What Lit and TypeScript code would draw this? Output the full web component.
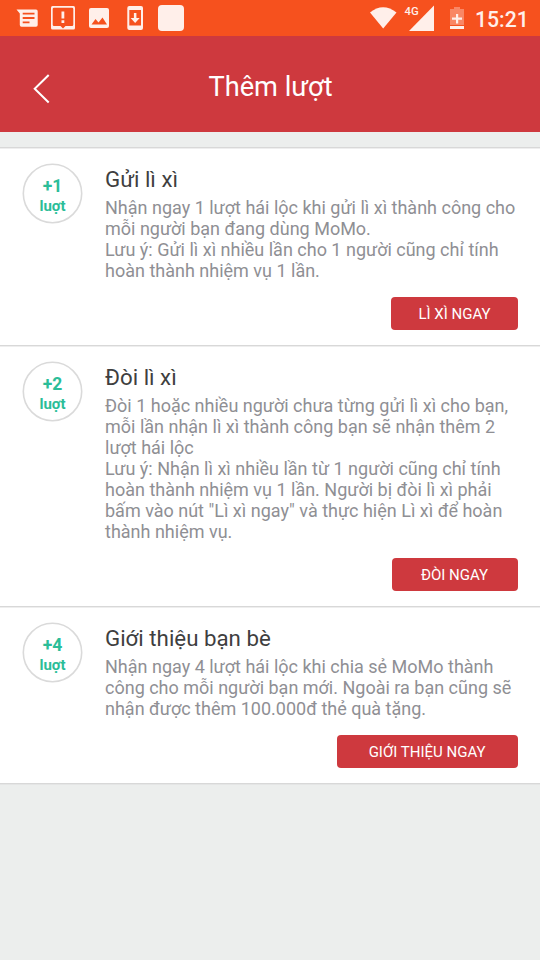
import { LitElement, html, css } from "lit";
import { customElement, property } from "lit/decorators.js";

interface Task { turns: number; title: string; lines: string[]; action: string; }

const TASKS: Task[] = [
  { turns: 1, title: "Gửi lì xì", action: "LÌ XÌ NGAY", lines: [
    "Nhận ngay 1 lượt hái lộc khi gửi lì xì thành công cho", "mỗi người bạn đang dùng MoMo.",
    "Lưu ý: Gửi lì xì nhiều lần cho 1 người cũng chỉ tính", "hoàn thành nhiệm vụ 1 lần."] },
  { turns: 2, title: "Đòi lì xì", action: "ĐÒI NGAY", lines: [
    "Đòi 1 hoặc nhiều người chưa từng gửi lì xì cho bạn,", "mỗi lần nhận lì xì thành công bạn sẽ nhận thêm 2", "lượt hái lộc",
    "Lưu ý: Nhận lì xì nhiều lần từ 1 người cũng chỉ tính", "hoàn thành nhiệm vụ 1 lần. Người bị đòi lì xì phải",
    "bấm vào nút \"Lì xì ngay\" và thực hiện Lì xì để hoàn", "thành nhiệm vụ."] },
  { turns: 4, title: "Giới thiệu bạn bè", action: "GIỚI THIỆU NGAY", lines: [
    "Nhận ngay 4 lượt hái lộc khi chia sẻ MoMo thành", "công cho mỗi người bạn mới. Ngoài ra bạn cũng sẽ", "nhận được thêm 100.000đ thẻ quà tặng."] },
];

@customElement("task-card")
export class TaskCard extends LitElement {
  @property({ attribute: false }) task!: Task;
  static styles = css`
    :host { display: flex; align-items: flex-start; background: #fff; padding: 15px 22.5px 15px 22px; border-bottom: 1px solid #d8d8d8; box-shadow: inset 0 1px #eeeeee; }
    .badge { flex: none; display: grid; width: 61px; height: 61px; color: #2bbd98; font-weight: 700; text-align: center; }
    .ring { grid-area: 1 / 1; display: block; }
    .count { grid-area: 1 / 1; padding-top: 13px; }
    .plus { font-size: 17.5px; line-height: 20px; }
    .unit { font-size: 15px; line-height: 20px; }
    .body { flex: 1; margin-left: 22px; display: flex; flex-direction: column; }
    .title { font-size: 22.3px; line-height: 30px; margin-top: 1px; color: #3f3f3f; white-space: nowrap; }
    .text { font-size: 18px; line-height: 21px; color: #8f8f94; margin-top: 3px; }
    .line { white-space: nowrap; }
    .action { align-self: flex-end; font-size: 15px; line-height: 33px; height: 33px; min-width: 126px; box-sizing: border-box; padding: 1px 27px 0;
      border-radius: 4px; background: #ce393e; color: #fff; margin-top: 16px; white-space: nowrap; text-align: center; }
    .wide { padding: 1px 32px 0; }
  `;
  render() {
    const t = this.task;
    return html`
      <div class="badge">
        <svg class="ring" width="61" height="61" viewBox="0 0 61 61"><circle cx="30.500" cy="30.500" r="29.200" fill="none" stroke="#dadada" stroke-width="1.600"/></svg>
        <div class="count"><div class="plus">+${t.turns}</div><div class="unit">luợt</div></div>
      </div>
      <div class="body">
        <div class="title">${t.title}</div>
        <div class="text">${t.lines.map((l) => html`<div class="line">${l}</div>`)}</div>
        <div class="action ${t.action.length > 12 ? "wide" : ""}" role="button">${t.action}</div>
      </div>`;
  }
}

@customElement("status-bar")
export class StatusBar extends LitElement {
  static styles = css`
    :host { display: flex; justify-content: space-between; height: 36px; background: #f6511e; color: #ffefea; }
    svg { display: block; flex: none; }
    .right { display: flex; }
    .time { font-size: 21.2px; font-weight: 500; line-height: 39px; width: 65px; white-space: nowrap; }
    .net { font-size: 11.3px; font-weight: 500; font-family: Roboto, sans-serif; }
  `;
  render() {
    return html`
      <svg width="200" height="36" viewBox="0 0 200 36" fill="#ffefea">
        <path d="M16.500 9.500H36Q37.700 9.500 37.700 11.200V25Q37.700 26.700 36 26.700H21.500Q19.800 26.700 19.800 25V13.500Z"/>
        <path d="M22.700 13.700H34.500M22.700 18H34.500M22.700 22.300H29.500" stroke="#f6511e" stroke-width="1.8"/>
        <rect x="51" y="6" width="24" height="23.500" rx="1.5"/>
        <path d="M54 7.800H72Q73.300 7.800 73.300 9V24.700Q73.300 26 72 26H65.500L63 28.500L60.500 26H54Q52.700 26 52.700 24.700V9Q52.700 7.800 54 7.800Z" fill="#f6511e"/>
        <path d="M61.500 11.500H64.300V18.500H61.500ZM61.500 20.200H64.300V23H61.500Z"/>
        <rect x="89" y="8" width="20" height="20" rx="2"/>
        <path d="M91.500 24.500L95.500 19L98.500 22.500L102.500 17.500L107 24.500Z" fill="#f6511e"/>
        <rect x="127.300" y="6" width="15.700" height="24" rx="2"/>
        <path d="M129.300 10H141V25.500H129.300Z" fill="#f6511e"/>
        <path d="M133.900 13H136.400V18H139.700L135.150 23L130.600 18H133.900Z"/>
        <rect x="158" y="5" width="26" height="26" rx="4"/>
      </svg>
      <div class="right">
        <svg width="125" height="36" viewBox="350 0 125 36" fill="#ffefea">
          <path d="M370 12.500Q383 1.800 396.500 12.500L383.200 28.500Z"/>
          <text class="net" x="404.500" y="15">4G</text>
          <path d="M434 5.500V31H409Z"/>
          <path d="M454 7H460V9H464V25H450V9H454Z" opacity=".35"/>
          <path d="M450 26H464V29H450ZM456 14H458.200V17.500H462V19.700H458.200V23.500H456V19.700H452V17.500H456Z"/>
        </svg>
        <div class="time">15:21</div>
      </div>`;
  }
}

@customElement("app-root")
export class AppRoot extends LitElement {
  static styles = css`
    :host { display: block; width: 540px; height: 960px; overflow: hidden; background: #eceeed; font-family: Roboto, sans-serif; }
    .header { height: 96px; background: #ce393e; color: #fff; display: grid; grid-template-columns: 82px 1fr 82px; align-items: center; }
    .back { display: block; margin: 9px 0 0 31px; }
    .title { font-size: 27.2px; line-height: 36px; text-align: center; padding: 5px 0 0 1px; }
    .list { margin-top: 15px; border-top: 1px solid #d8d8d8; border-bottom: 1px solid #e4e5e5; }
  `;
  render() {
    return html`<status-bar></status-bar>
      <div class="header">
        <svg class="back" width="20" height="32" viewBox="0 0 20 32" fill="none" stroke="#fff" stroke-width="2"><path d="M17.700 2L3.700 15.800L17.700 29.500"/></svg>
        <div class="title">Thêm lượt</div>
      </div>
      <div class="list">${TASKS.map((t) => html`<task-card .task=${t}></task-card>`)}</div>`;
  }
}
